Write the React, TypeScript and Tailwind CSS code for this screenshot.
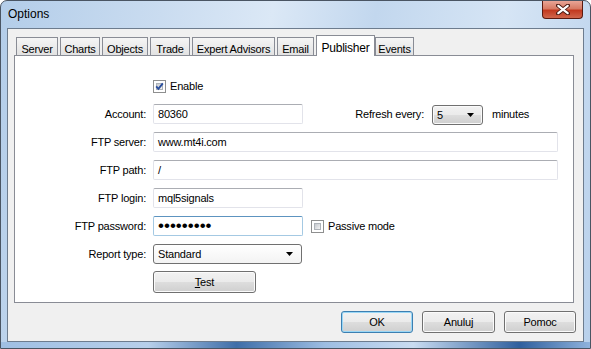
import React from 'react';

const ui = "font-['Liberation_Sans',Arial,sans-serif] text-[11px] tracking-[-0.2px] text-black";

const TABS = [
  { label: 'Server', w: 'w-[42px]' },
  { label: 'Charts', w: 'w-[40px]' },
  { label: 'Objects', w: 'w-[46px]' },
  { label: 'Trade', w: 'w-[40px]' },
  { label: 'Expert Advisors', w: 'w-[83px]' },
  { label: 'Email', w: 'w-[37px]' },
  { label: 'Publisher', w: 'w-[59px]', active: true },
  { label: 'Events', w: 'w-[39px]' },
];

function CheckBox({ checked }: { checked?: boolean }) {
  return (
    <div className="relative w-[13px] h-[13px] flex-none border border-[#8e8f8f] bg-white p-[2px]">
      <div className="w-full h-full border border-[#aeb3b9] bg-[linear-gradient(135deg,#c4c8ce,#f4f4f4)]" />
      {checked && (
        <svg className="absolute left-0 top-0" width="11" height="11" viewBox="0 0 11 11">
          <path d="M2.2 5.4 L4.4 7.8 L8.8 2.4" fill="none" stroke="#2b4f9e" strokeWidth="1.9" />
        </svg>
      )}
    </div>
  );
}

function TextBox({ value, w, focused }: { value: React.ReactNode; w: string; focused?: boolean }) {
  return (
    <div
      className={`h-[20px] ${w} flex-none flex items-center pl-[4px] bg-white border rounded-[2px] ${
        focused ? 'border-[#a4c9e3] border-t-[#5d94c0]' : 'border-[#e2e3ea] border-t-[#abadb3]'
      }`}
    >
      {value}
    </div>
  );
}

function Arrow() {
  return (
    <svg width="7" height="4" viewBox="0 0 7 4" className="flex-none">
      <polygon points="0,0 7,0 3.5,4" fill="#000" />
    </svg>
  );
}

function Btn({ children, def, w }: { children: React.ReactNode; def?: boolean; w: string }) {
  return (
    <div
      className={`${w} h-[22px] flex-none rounded-[3px] border ${
        def ? 'border-[#3c7fb1] shadow-[inset_0_0_0_1px_#9ad7f6]' : 'border-[#707070] shadow-[inset_0_0_0_1px_#fbfbfb]'
      } bg-[linear-gradient(#f2f2f2_0%,#ebebeb_48%,#dddddd_52%,#cfcfcf_100%)] flex items-center justify-center`}
    >
      {children}
    </div>
  );
}

function Row({ label, children }: { label?: string; children: React.ReactNode }) {
  return (
    <div className="h-[20px] flex items-center">
      <div className="w-[132px] pr-[1px] text-right flex-none">{label}</div>
      <div className="ml-[6px] flex items-center">{children}</div>
    </div>
  );
}

export default function App() {
  return (
    <div
      className={`${ui} w-[591px] h-[349px] overflow-hidden rounded-t-[7px] border border-[#4a5563] bg-[linear-gradient(100deg,#b3cde9_0%,#cadcf0_25%,#dbe8f6_42%,#c2d7ee_58%,#d6e5f5_78%,#b8d0eb_100%)] flex flex-col`}
    >
      {/* title bar */}
      <div className="h-[27px] flex items-start">
        <div className="pl-[7px] pt-[5px] text-[12px] leading-[16px] tracking-normal">Options</div>
        <div className="ml-auto mr-[7px] w-[41px] h-[18px] rounded-b-[4px] border border-t-0 border-[#5b1a10] bg-[linear-gradient(#e9a596_0%,#d77a64_45%,#c2391f_55%,#d0664c_100%)] flex items-center justify-center">
          <svg width="14" height="11" viewBox="0 0 14 11">
            <path d="M2 1.5 L12 9.5 M12 1.5 L2 9.5" stroke="#4b1a12" strokeWidth="4" strokeLinecap="round" />
            <path d="M2.3 1.8 L11.7 9.2 M11.7 1.8 L2.3 9.2" stroke="#ffffff" strokeWidth="2.2" strokeLinecap="round" />
          </svg>
        </div>
      </div>

      {/* client area */}
      <div className="mx-[6px] w-[577px] h-[314px] border border-[#6d7c8e] bg-[#f0f0f0] flex flex-col">
        <div className="pt-[6px] pl-[6px] pr-[9px]">
          {/* tabs */}
          <div className="h-[20px] flex items-end pl-[2px]">
            {TABS.map((t, i) =>
              t.active ? (
                <div
                  key={t.label}
                  className={`${t.w} relative z-10 -mb-px h-[21px] bg-white border border-b-0 border-[#898c95] flex justify-center pt-[3px] text-[12px]`}
                >
                  {t.label}
                </div>
              ) : (
                <div
                  key={t.label}
                  className={`${t.w} ${i < 6 ? 'mr-[2px]' : ''} h-[18px] bg-[linear-gradient(#f5f5f5,#e2e2e2)] border border-b-0 border-[#898c95] flex justify-center pt-[3px]`}
                >
                  {t.label}
                </div>
              )
            )}
          </div>

          {/* pane */}
          <div className="h-[248px] border border-[#898c95] bg-white pt-[20px] flex flex-col gap-[8px]">
            <Row>
              <CheckBox checked />
              <span className="ml-[4px]">Enable</span>
            </Row>
            <Row label="Account:">
              <TextBox value="80360" w="w-[150px]" />
              <div className="w-[129px] text-right pr-[8px] flex-none">Refresh every:</div>
              <div className="w-[51px] h-[20px] mt-[2px] flex-none rounded-[3px] border border-[#707070] bg-[linear-gradient(#f2f2f2_0%,#ebebeb_48%,#dddddd_52%,#cfcfcf_100%)] shadow-[inset_0_0_0_1px_#fafafa] flex items-center pl-[4px] pr-[8px]">
                <span className="flex-1">5</span>
                <Arrow />
              </div>
              <span className="ml-[9px]">minutes</span>
            </Row>
            <Row label="FTP server:">
              <TextBox value="www.mt4i.com" w="w-[405px]" />
            </Row>
            <Row label="FTP path:">
              <TextBox value="/" w="w-[405px]" />
            </Row>
            <Row label="FTP login:">
              <TextBox value="mql5signals" w="w-[150px]" />
            </Row>
            <Row label="FTP password:">
              <TextBox
                value={<span className="text-[17px] leading-none tracking-[0px] -mt-[1px]">•••••••••</span>}
                w="w-[150px]"
                focused
              />
              <div className="ml-[8px]">
                <CheckBox />
              </div>
              <span className="ml-[4px]">Passive mode</span>
            </Row>
            <Row label="Report type:">
              <div className="w-[149px] h-[20px] flex-none rounded-[3px] border border-[#707070] bg-[linear-gradient(#ffffff,#f3f3f3)] flex items-center pl-[4px] pr-[8px]">
                <span className="flex-1">Standard</span>
                <Arrow />
              </div>
            </Row>
            <Row>
              <Btn w="w-[103px]">
                <span>
                  <span className="underline">T</span>est
                </span>
              </Btn>
            </Row>
          </div>
        </div>

        {/* buttons */}
        <div className="mt-[8px] pr-[7px] flex justify-end gap-[9px]">
          <Btn w="w-[72px]" def>
            OK
          </Btn>
          <Btn w="w-[73px]">Anuluj</Btn>
          <Btn w="w-[72px]">Pomoc</Btn>
        </div>
      </div>

      {/* bottom frame */}
      <div className="flex-1 bg-[linear-gradient(90deg,#9fbfe3_0%,#b7cfea_25%,#3f6ea8_40%,#9dbde2_55%,#c9dcf1_70%,#2f5f9d_88%,#8fb2dc_100%)]" />
    </div>
  );
}
